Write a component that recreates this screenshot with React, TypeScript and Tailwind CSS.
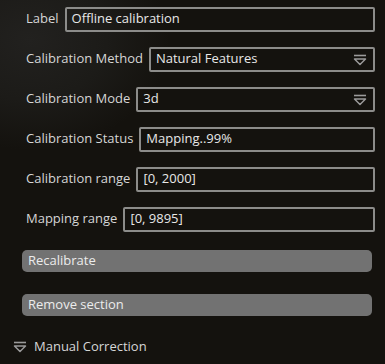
import React from "react";

function DropIcon({ className = "" }: { className?: string }) {
  return (
    <svg width="14" height="12" viewBox="0 0 14 12" className={className}>
      <line x1="1" y1="1.5" x2="13" y2="1.5" stroke="#9a9a9a" strokeWidth="1.6" />
      <path d="M1.5 5 L12.5 5 L7 10.5 Z" fill="none" stroke="#9a9a9a" strokeWidth="1.5" strokeLinejoin="round" />
    </svg>
  );
}

function Row({ label, value, drop }: { label: string; value: string; drop?: boolean }) {
  return (
    <div className="flex items-center h-[40px]">
      <span className="text-[13px] text-[#d6d6d6] whitespace-nowrap mr-[6px]">{label}</span>
      <div className="flex-1 h-[25px] border-2 border-[#8c8c8a] rounded-[2px] flex items-center px-[5px] relative">
        <span className="text-[13px] text-[#e8e8e8] whitespace-nowrap">{value}</span>
        {drop && <DropIcon className="absolute right-[6px] top-[5px]" />}
      </div>
    </div>
  );
}

export default function App() {
  return (
    <div
      className="w-[385px] h-[364px] overflow-hidden bg-[#14120e]"
      style={{
        fontFamily: '"Open Sans", "Noto Sans", sans-serif',
        backgroundImage:
          "radial-gradient(ellipse 140px 110px at 30px 40px, #22211f 0%, #1c1b18 55%, rgba(20,18,14,0) 100%)",
      }}
    >
      <div className="pl-[26px] pr-[10px] flex flex-col">
        <div className="mt-[-1px]">
          <Row label="Label" value="Offline calibration" />
          <Row label="Calibration Method" value="Natural Features" drop />
          <Row label="Calibration Mode" value="3d" drop />
          <Row label="Calibration Status" value="Mapping..99%" />
          <Row label="Calibration range" value="[0, 2000]" />
          <Row label="Mapping range" value="[0, 9895]" />
        </div>
      </div>
      <div className="pl-[22px] pr-[13px] mt-[11px] flex flex-col gap-[22px]">
        <div className="h-[22px] rounded-[5px] bg-[#727272] flex items-center px-[6px] text-[13px] text-[#ececec]">
          Recalibrate
        </div>
        <div className="h-[22px] rounded-[5px] bg-[#727272] flex items-center px-[6px] text-[13px] text-[#ececec]">
          Remove section
        </div>
      </div>
      <div className="flex items-center pl-[13px] mt-[21px]">
        <DropIcon className="mr-[7px]" />
        <span className="text-[13px] text-[#d6d6d6]">Manual Correction</span>
      </div>
    </div>
  );
}
